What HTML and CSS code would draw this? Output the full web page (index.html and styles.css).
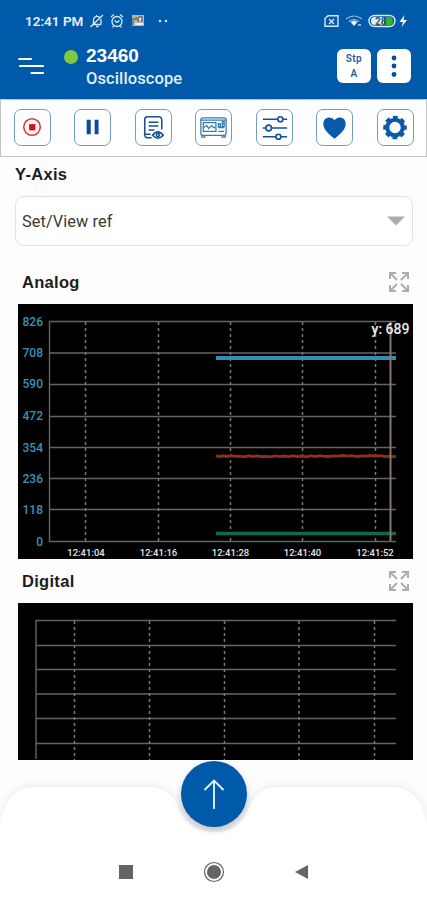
FILE: index.html
```html
<!DOCTYPE html>
<html lang="en">
<head>
    <meta charset="UTF-8">
    <meta name="viewport" content="width=device-width, initial-scale=1.0">
    <title>Oscilloscope</title>
    <link rel="stylesheet" href="styles.css">
</head>
<body>
    <header class="header">
        <div class="status">
            <span class="time">12:41 PM</span>
            <svg class="status-left" width="84" height="16" viewBox="0 0 84 16" fill="none" stroke="#d9e8f5" stroke-width="1.3">
                <path d="M3 11.5h9M4.5 11V7a3.5 3.5 0 0 1 6-2.5M12 6v5.5M7 13.5h2.500M1.500 14L14 2M7.500 2v1"/>
                <circle cx="28" cy="8.500" r="5"/>
                <path d="M22 4l3-2.500M34 4l-3-2.500M25.500 7.500l2.500 2 2.500-2M24.500 13l-1 1.500M31.500 13l1 1.500"/>
                <rect x="43" y="2" width="12" height="11" fill="#b9b4ac" stroke="none"/>
                <path d="M44 12V6h3M47 4l2 4 1-4h3v5" stroke="#6d6a68"/>
                <path d="M50 6h2M46 11h8" stroke="#fff"/>
                <circle cx="71" cy="8" r="1.300" fill="#d9e8f5" stroke="none"/>
                <circle cx="77" cy="8" r="1.300" fill="#d9e8f5" stroke="none"/>
            </svg>
            <svg class="status-right" width="86" height="16" viewBox="0 0 86 16" fill="none" stroke="#d9e8f5" stroke-width="1.4">
                <path d="M5 2.700h10v10.600H2V5.500z"/>
                <path d="M6 6l5 5M11 6l-5 5"/>
                <path d="M23 6q8-6 16 0M26 8.500q5-4 10 0" stroke="#8fb8dc" stroke-width="1.200"/>
                <path d="M27.500 9q3.500-3 7 0L31 13z" fill="#e8f2fa" stroke="none"/>
                <path d="M35 11h3v2h-3z" fill="#8fb8dc" stroke="none"/>
                <rect x="46" y="2.500" width="26" height="11" rx="5.500"/>
                <path d="M48 8a4 4 0 0 1 4-4h9v8h-9a4 4 0 0 1-4-4z" fill="#e6efe9" stroke="none"/>
                <path d="M63 4h3a4 4 0 0 1 0 8h-3z" fill="#32b52c" stroke="none"/>
                <text class="battery" x="52" y="11.700">28</text>
                <path d="M81.500 2L76.500 9h3.500l-1.500 5 5.500-7h-3.500z" fill="#fff" stroke="none"/>
            </svg>
        </div>
        <div class="title-row">
            <svg class="menu" width="26" height="20" viewBox="0 0 26 20" stroke="#fff" stroke-width="2.200" stroke-linecap="round">
                <path d="M1.200 3H13M2 10H25M13.500 17H25"/>
            </svg>
            <span class="dot"></span>
            <div class="titles">
                <h1>23460</h1>
                <p>Oscilloscope</p>
            </div>
            <button class="square step"><span>Stp</span><span>A</span></button>
            <button class="square">
                <svg width="34" height="34" viewBox="0 0 34 34" fill="#064d9c">
                    <circle cx="17" cy="9" r="2.400"/>
                    <circle cx="17" cy="17" r="2.400"/>
                    <circle cx="17" cy="25.500" r="2.400"/>
                </svg>
            </button>
        </div>
    </header>

    <nav class="toolbar">
        <button class="tool">
            <svg viewBox="0 0 36 36"><circle cx="17.500" cy="17.500" r="8.500" fill="none" stroke="#e2353c" stroke-width="1.600"/><rect x="14.500" y="14.500" width="6.500" height="6.500" fill="#e00d19"/></svg>
        </button>
        <button class="tool">
            <svg viewBox="0 0 36 36" fill="#0b4a9f"><path d="M12 10h4.200v15H12zM20.200 10h4v15h-4z"/></svg>
        </button>
        <button class="tool">
            <svg viewBox="0 0 36 36" fill="none" stroke="#174f98" stroke-width="1.600">
                <path d="M16 28.500h-5a3 3 0 0 1-2-3V10a3 3 0 0 1 3-3h11.500a3 3 0 0 1 3 3v10M13 12.500h10M13 16.500h10M13 20.500h6M8 25h7"/>
                <path d="M17 26q5.500-7 11 0q-5.500 6-11 0z" fill="#fff"/>
                <circle cx="22.500" cy="25.800" r="1.600"/>
            </svg>
        </button>
        <button class="tool">
            <svg viewBox="0 0 36 36" fill="none" stroke="#367daf" stroke-width="1.300">
                <rect x="5" y="8" width="26" height="18" rx="2"/>
                <rect x="7.500" y="13" width="13" height="9"/>
                <path d="M5 10.500h26M8 18l3-2 2 3 3-3 2 2h2M23 14h2M27 14h2M23 18h6M23 22h6M6 26v2h3v-2M27 26v2h3v-2"/>
                <path d="M23 14h2v3h-2zM27 12h2v5h-2z"/>
            </svg>
        </button>
        <button class="tool">
            <svg viewBox="0 0 36 36" fill="#fff" stroke="#174f98" stroke-width="1.700">
                <path d="M6 9.500h25M6 18.500h25M6 27.500h25"/>
                <circle cx="24" cy="9.500" r="2.600"/>
                <circle cx="12" cy="18.500" r="2.900"/>
                <circle cx="22" cy="27.500" r="2.600"/>
            </svg>
        </button>
        <button class="tool">
            <svg viewBox="0 0 36 36" fill="#0859a8"><path d="M18 29.500C14 26.500 6.500 21 6.500 14.500C6.500 7 14.500 6 18 10.500C21.500 6 29.500 7 29.500 14.500C29.500 21 22 26.500 18 29.500z"/></svg>
        </button>
        <button class="tool">
            <svg viewBox="0 0 36 36" fill="none" stroke="#0859a8">
                <circle cx="17.500" cy="18" r="8" stroke-width="4.200"/>
                <circle cx="17.500" cy="18" r="10.500" stroke-width="3.200" stroke-dasharray="4.800 3.447" stroke-dashoffset="2.400"/>
            </svg>
        </button>
    </nav>

    <main class="content">
        <h2 class="axis-label">Y-Axis</h2>
        <div class="select">
            <span>Set/View ref</span>
            <svg width="18" height="10" viewBox="0 0 18 10" fill="#acacac"><path d="M0 .5h18L9 9.500z"/></svg>
        </div>

        <section class="panel">
            <div class="panel-head">
                <h2>Analog</h2>
                <svg class="expand" width="22" height="22" viewBox="0 0 22 22" fill="none" stroke="#adadad" stroke-width="2">
                    <path d="M2 8V2h6M2 2l7 7M14 2h6v6M20 2l-7 7M2 14v6h6M2 20l7-7M20 14v6h-6M20 20l-7-7"/>
                </svg>
            </div>
            <svg class="chart" width="395" height="255" viewBox="0 0 395 255" fill="none">
                <path class="grid" d="M31 17.500H378M31 49H378M31 80.500H378M31 112.500H378M31 143.500H378M31 174.500H378M31 205.500H378M31 237.500H378M31.500 17V238"/>
                <path class="grid-dash" d="M67.500 18V237M140.500 18V237M212.500 18V237M284.500 18V237M357.500 18V237"/>
                <path d="M198 54H378" stroke="#328db8" stroke-width="4"/>
                <path d="M198 152l4 .6 3-.8 4 .7 4-.9 5 .8 4-.2 4 .6 5-1.200 4 1 4-.8 5 .8 4-.3 4 .6 5-1 5 .7 4-.6 5 .7 4-1 4 .8 5-.4 5 .8 4-1.200 4 .8 5-.8 5 .6 4 .2 5-.7 5 .3 4-.8 5 .9 4-.5 5 .9 4-.6 5 .2 4-.8 5 .8 5-.5 5 .9 3-.4 4 .5 4-.3" stroke="#922e1c" stroke-width="2.800"/>
                <path d="M198 229.500H378" stroke="#0c6b4c" stroke-width="3.500"/>
                <path d="M372.500 18V237" stroke="#8a7769" stroke-width="2"/>
                <g class="y-labels">
                    <text x="25" y="21.500">826</text>
                    <text x="25" y="53">708</text>
                    <text x="25" y="84">590</text>
                    <text x="25" y="116">472</text>
                    <text x="25" y="147.500">354</text>
                    <text x="25" y="179">236</text>
                    <text x="25" y="210">118</text>
                    <text x="25" y="241.500">0</text>
                </g>
                <g class="x-labels">
                    <text x="68" y="252">12:41:04</text>
                    <text x="140.500" y="252">12:41:16</text>
                    <text x="212.500" y="252">12:41:28</text>
                    <text x="284.500" y="252">12:41:40</text>
                    <text x="357" y="252">12:41:52</text>
                </g>
                <text class="marker" x="391.500" y="30">y: 689</text>
            </svg>
        </section>

        <section class="panel digital">
            <div class="panel-head">
                <h2>Digital</h2>
                <svg class="expand" width="22" height="22" viewBox="0 0 22 22" fill="none" stroke="#adadad" stroke-width="2">
                    <path d="M2 8V2h6M2 2l7 7M14 2h6v6M20 2l-7 7M2 14v6h6M2 20l7-7M20 14v6h-6M20 20l-7-7"/>
                </svg>
            </div>
            <svg class="chart" width="395" height="157" viewBox="0 0 395 157" fill="none">
                <path class="grid" d="M18 17.500H378M18 42.500H378M18 66.500H378M18 91H378M18 115.500H378M18 140.500H378M18 17V156"/>
                <path class="grid-dash" d="M56.500 18V157M131.500 18V157M206.500 18V157M281 18V157M356.500 18V157"/>
            </svg>
        </section>
    </main>

    <footer class="footer">
        <svg class="sheet" width="427" height="140" viewBox="0 0 427 140">
            <path d="M0 65C4 42 14 27 34 27H148C164 27 172 34 177 45C184 64 197 72 214 72C231 72 244 64 250 45C256 34 263 27 279 27H393C413 27 423 42 427 65V150H0z" fill="#fff"/>
        </svg>
        <button class="fab">
            <svg width="22" height="32" viewBox="0 0 22 32" fill="none" stroke="#eaf8ff" stroke-width="1.800"><path d="M11 31V2M1.500 12L11 2.500L20.500 12"/></svg>
        </button>
        <div class="system-nav">
            <svg width="22" height="22" viewBox="0 0 22 22"><path d="M4 4h14v14H4z"/></svg>
            <svg width="22" height="22" viewBox="0 0 22 22"><circle cx="11" cy="11" r="7"/><circle cx="11" cy="11" r="9.500" fill="none" stroke="#646464" stroke-width="1.200"/></svg>
            <svg width="22" height="22" viewBox="0 0 22 22"><path d="M17 4v14L4 11z"/></svg>
        </div>
    </footer>
</body>
</html>
```
FILE: styles.css
```css
* {
    box-sizing: border-box;
}
body {
    margin: 0;
    width: 427px;
    height: 900px;
    overflow: hidden;
    background: #fdfdfd;
    color: #1c1c1c;
    font-family: Roboto, "Liberation Sans", sans-serif;
}
h1, h2, p {
    margin: 0;
}
svg {
    display: block;
}
button {
    padding: 0;
    border: none;
    font-family: inherit;
}
.header {
    height: 99px;
    padding-top: 12px;
    background: #015aa9;
    color: #fff;
}
.status {
    display: flex;
    align-items: center;
    height: 18px;
    padding: 0 18px 0 25px;
}
.time {
    width: 64px;
    color: #e6f0f9;
    font-size: 13.5px;
    font-weight: 600;
    white-space: nowrap;
}
.status-right {
    margin-left: auto;
}
.battery {
    fill: #31566f;
    stroke: none;
    font-size: 10px;
    font-weight: 700;
}
.title-row {
    display: flex;
    padding: 13px 16px 0 18px;
}
.menu {
    margin-top: 13px;
}
.dot {
    width: 14px;
    height: 14px;
    margin: 7px 8px 0 20px;
    border-radius: 50%;
    background: #7fc93f;
}
.titles {
    flex: 1;
}
.titles h1 {
    font-family: "Liberation Sans", sans-serif;
    font-size: 19px;
    line-height: 25px;
    font-weight: 700;
}
.titles p {
    color: #e1edf8;
    font-size: 16.5px;
    line-height: 22px;
    font-weight: 500;
    letter-spacing: 0.1px;
}
.square {
    width: 34px;
    height: 34px;
    margin: 6px 0 0 6px;
    border-radius: 6px;
    background: #fff;
    color: #1d5f99;
}
.step {
    display: flex;
    flex-direction: column;
    align-items: center;
    font-size: 10px;
    font-weight: 600;
    letter-spacing: 0.4px;
    line-height: 15px;
    padding-top: 2px;
}
.toolbar {
    display: flex;
    justify-content: space-between;
    height: 58px;
    padding: 9px 12px 0 12.5px;
    border: 1.5px solid #c3c3c6;
    background: #fff;
}
.tool {
    width: 37px;
    height: 37px;
    border: 1.3px solid #719fb9;
    border-radius: 7px;
    background: #fff;
}
.tool svg {
    width: 35px;
    height: 35px;
}
.content {
    height: 603px;
    padding-top: 6px;
}
h2 {
    font-family: "Liberation Sans", sans-serif;
    font-size: 16.5px;
    line-height: 22px;
    font-weight: 700;
    letter-spacing: 0.3px;
}
.axis-label {
    padding-left: 15px;
}
.select {
    display: flex;
    align-items: center;
    justify-content: space-between;
    height: 50px;
    margin: 11px 14px 0 15px;
    padding: 0 7px 0 6px;
    border: 1.5px solid #dfe2e2;
    border-radius: 9px;
    background: #fff;
    color: #383838;
    font-size: 16.3px;
    letter-spacing: 0.1px;
}
.panel {
    padding: 25px 14px 0 18px;
}
.panel-head {
    display: flex;
    justify-content: space-between;
    height: 33px;
    padding: 0 3px 0 4px;
}
.digital {
    padding-top: 11px;
}
.chart {
    background: #000;
}
.grid {
    stroke: #646464;
    stroke-width: 1.4;
}
.grid-dash {
    stroke: #777;
    stroke-width: 1.5;
    stroke-dasharray: 3 3;
}
.y-labels {
    fill: #3c92b8;
    font-size: 12px;
    font-weight: 500;
    text-anchor: end;
}
.x-labels {
    fill: #e4e4e4;
    font-size: 9.5px;
    font-weight: 500;
    text-anchor: middle;
}
.marker {
    fill: #eee;
    font-size: 14px;
    font-weight: 500;
    text-anchor: end;
}
.footer {
    position: relative;
    height: 140px;
}
.sheet {
    filter: drop-shadow(0 -1px 4px rgba(0, 0, 0, 0.08));
}
.fab {
    position: absolute;
    top: 1px;
    left: 181px;
    display: flex;
    align-items: center;
    justify-content: center;
    width: 66px;
    height: 66px;
    border-radius: 50%;
    background: #015aa9;
    box-shadow: 0 3px 6px rgba(0, 0, 0, 0.25);
}
/* system keys sit on top of the white sheet */
.system-nav {
    position: absolute;
    bottom: 17px;
    left: 0;
    right: 0;
    display: flex;
    justify-content: center;
    gap: 66px;
    fill: #646464;
}
```
